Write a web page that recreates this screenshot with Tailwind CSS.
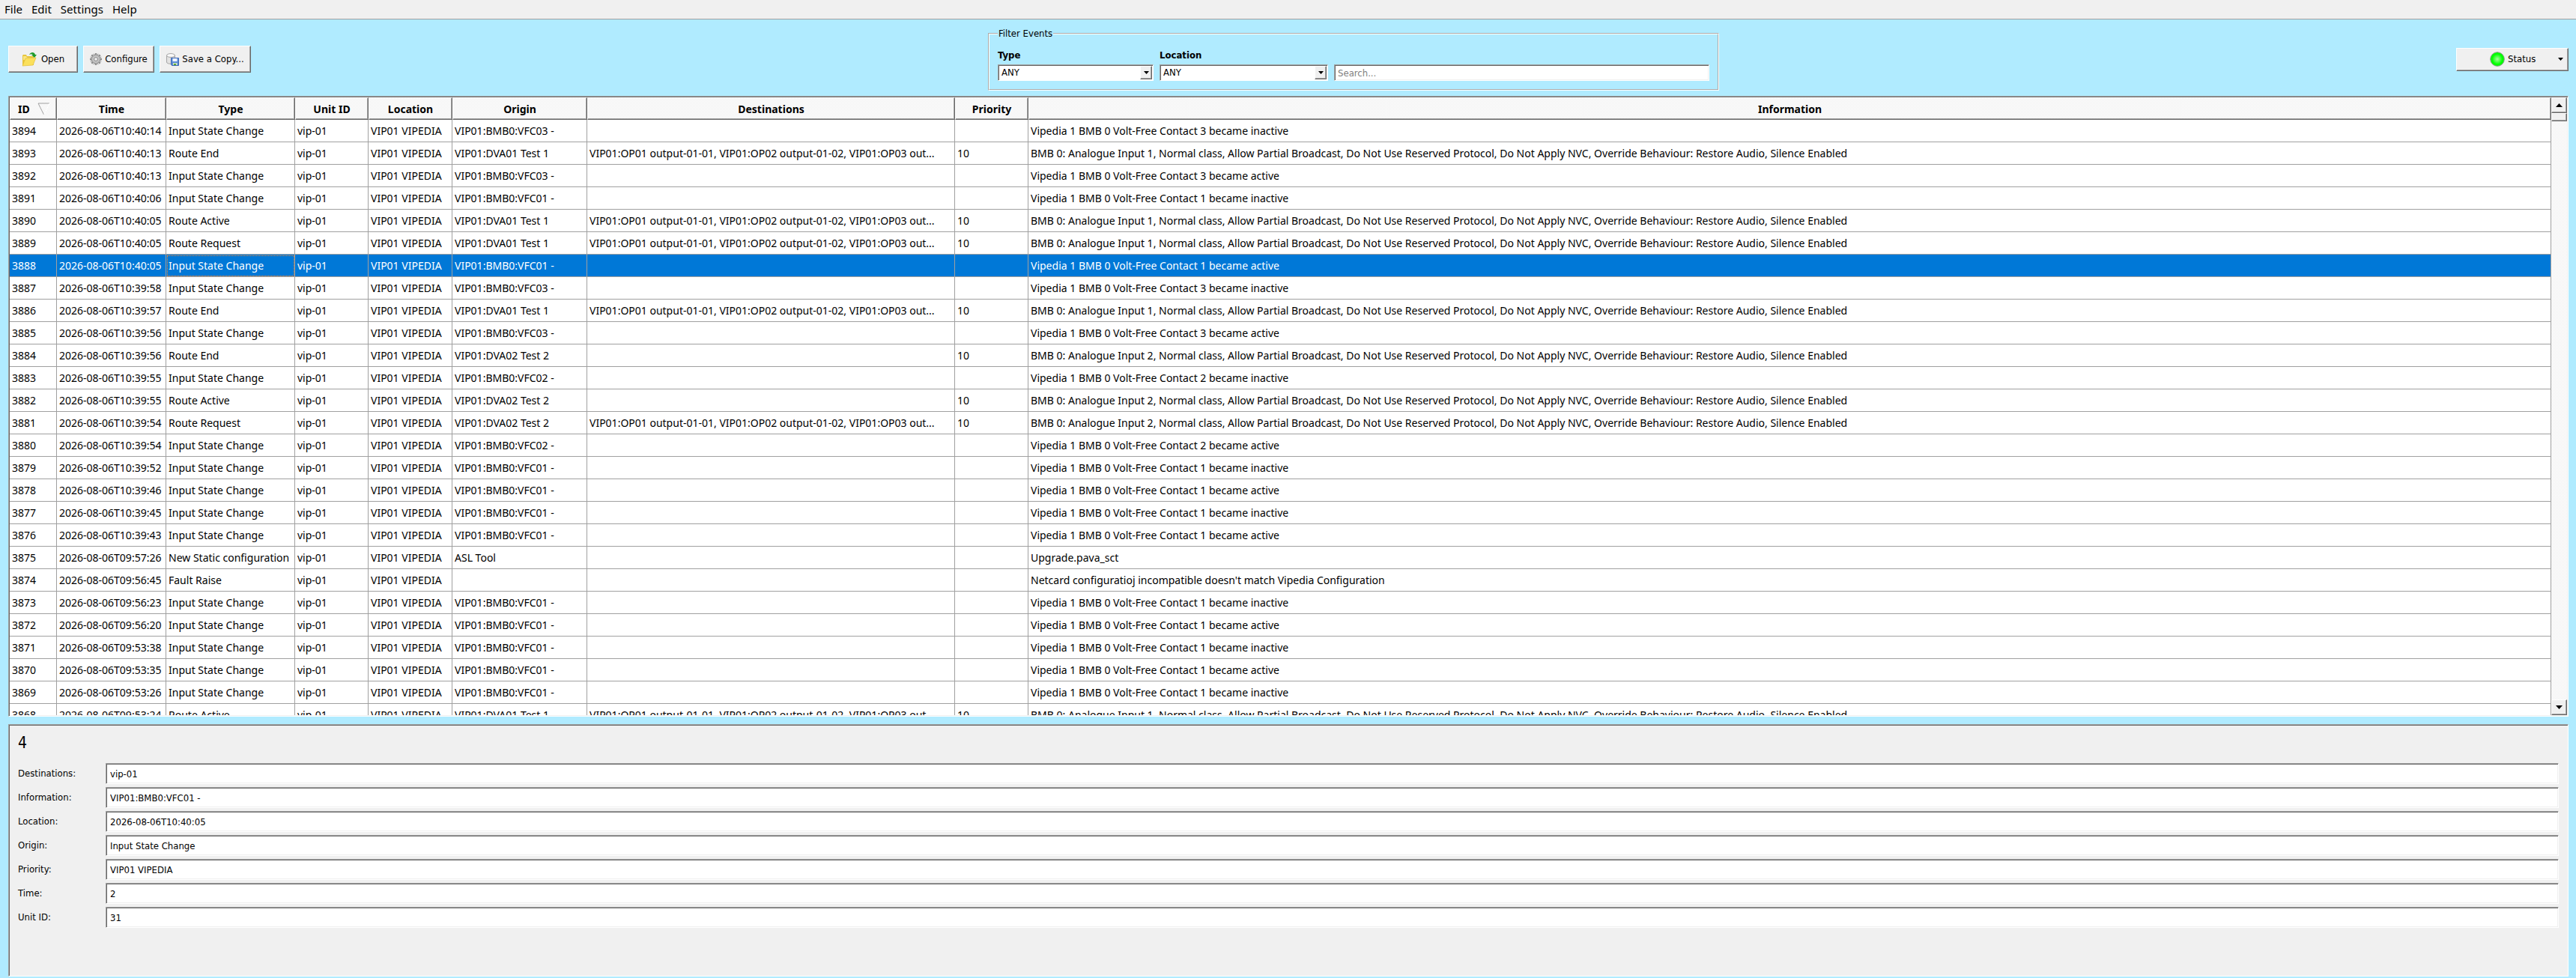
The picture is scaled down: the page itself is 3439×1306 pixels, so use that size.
<!DOCTYPE html>
<html lang="en">

<head>
    <meta charset="UTF-8">
    <meta name="viewport" content="width=device-width, initial-scale=1.0">
    <script src="https://cdn.jsdelivr.net/npm/@tailwindcss/browser@4"></script>
    <title>Event Viewer</title>
</head>

<body class="flex flex-col h-screen overflow-hidden bg-[#b0ebff] text-black text-[13px] font-['DejaVu_Sans_Condensed','DejaVu_Sans',sans-serif]">
    <nav class="flex items-center gap-3 h-[26px] px-1.5 bg-[#f0f0f0] border-b border-[#a0a0a0] text-[15px] font-['Noto_Sans',sans-serif]">
        <button>File</button>
        <button>Edit</button>
        <button>Settings</button>
        <button>Help</button>
    </nav>

    <header class="flex items-center justify-between h-[102px] pt-1 pl-[11px] pr-2.5">
        <div class="flex gap-[7px]">
            <button class="flex items-center justify-center gap-1.5 w-[93px] h-9 bg-[#f0f0f0] border border-t-white border-l-white border-b-[#696969] border-r-[#696969] shadow-[inset_-1px_-1px_0_#a0a0a0]">
                <svg width="20" height="20" viewBox="0 0 20 20">
                    <path d="M1 5l1-1h4l1 2h9v12H1z" fill="#e8c53c" />
                    <path d="M2 6h4l1 2h8v3H2z" fill="#f9e584" />
                    <path d="M5 9l14-1-4 10-14 1z" fill="#fbe05c" stroke="#e3bd3a" stroke-width=".7" />
                    <path d="M10 4c2-4 7-4 8 0h2l-3 4-4-4h2c-1-1-3-1-5 0z" fill="#1d9a2c" />
                </svg>
                Open
            </button>
            <button class="flex items-center justify-center gap-1 w-[95px] h-9 bg-[#f0f0f0] border border-t-white border-l-white border-b-[#696969] border-r-[#696969] shadow-[inset_-1px_-1px_0_#a0a0a0]">
                <svg width="16" height="16" viewBox="0 0 16 16">
                    <g stroke="#8c8c8c" stroke-width="2.4">
                        <path d="M8 0v16M0 8h16M2.3 2.3l11.4 11.4M13.7 2.3L2.3 13.7" />
                        <path d="M5 .8l6 14.4M11 .8L5 15.2M.8 5l14.4 6M15.2 5L.8 11" stroke-width="1" />
                    </g>
                    <circle cx="8" cy="8" r="5.6" fill="#c4c4c4" stroke="#999" />
                    <circle cx="8" cy="8" r="2.4" fill="#f0f0f0" stroke="#888" />
                </svg>
                Configure
            </button>
            <button class="flex items-center justify-center gap-1 w-[122px] h-9 bg-[#f0f0f0] border border-t-white border-l-white border-b-[#696969] border-r-[#696969] shadow-[inset_-1px_-1px_0_#a0a0a0]">
                <svg width="17" height="17" viewBox="0 0 17 17">
                    <path d="M.5 3v9c0 3 11 3 11 0V3z" fill="#e2e2e2" stroke="#a5a5a5" />
                    <ellipse cx="6" cy="3" rx="5.5" ry="2.4" fill="#fafafa" stroke="#a5a5a5" />
                    <path d="M6.5 6.5h10v10h-9l-1-1z" fill="#5b8bd6" stroke="#3d68b5" />
                    <path d="M8.500 7h6v4h-6z" fill="#eef4ff" />
                    <path d="M9 13h5.500v3H9z" fill="#d6ecc8" />
                    <path d="M10 14h3v2h-3z" fill="#5aa53c" />
                </svg>
                Save a Copy...
            </button>
        </div>

        <fieldset class="w-[976px] h-[84px] px-[11px] border-2 [border-style:groove] border-white">
            <legend class="px-px leading-4">Filter Events</legend>
            <div class="flex items-end gap-2 mt-[11px]">
                <div class="flex flex-col w-[208px]">
                    <label for="type" class="font-bold leading-5 mb-0.5">Type</label>
                    <div class="relative h-[22px] bg-white border border-t-[#a0a0a0] border-l-[#a0a0a0] border-b-white border-r-white shadow-[inset_1px_1px_0_#696969]">
                        <select id="type" class="appearance-none w-full h-full pl-1 leading-4 outline-0"><option>ANY</option></select>
                        <span class="absolute right-px top-px bottom-px w-4 flex items-center justify-center pointer-events-none bg-[#f0f0f0] border border-t-white border-l-white border-b-[#696969] border-r-[#696969] shadow-[inset_-1px_-1px_0_#a0a0a0]">
                            <svg width="7" height="4" viewBox="0 0 7 4"><path d="M0 0h7L3.500 4z" /></svg>
                        </span>
                    </div>
                </div>
                <div class="flex flex-col w-[225px]">
                    <label for="location" class="font-bold leading-5 mb-0.5">Location</label>
                    <div class="relative h-[22px] bg-white border border-t-[#a0a0a0] border-l-[#a0a0a0] border-b-white border-r-white shadow-[inset_1px_1px_0_#696969]">
                        <select id="location" class="appearance-none w-full h-full pl-1 leading-4 outline-0"><option>ANY</option></select>
                        <span class="absolute right-px top-px bottom-px w-4 flex items-center justify-center pointer-events-none bg-[#f0f0f0] border border-t-white border-l-white border-b-[#696969] border-r-[#696969] shadow-[inset_-1px_-1px_0_#a0a0a0]">
                            <svg width="7" height="4" viewBox="0 0 7 4"><path d="M0 0h7L3.500 4z" /></svg>
                        </span>
                    </div>
                </div>
                <input type="text" aria-label="Search" placeholder="Search..."
                    class="flex-1 h-[22px] px-1 bg-white placeholder:text-[#808080] outline-0 border border-t-[#a0a0a0] border-l-[#a0a0a0] border-b-white border-r-white shadow-[inset_1px_1px_0_#696969,inset_-1px_-1px_0_#f0f0f0]">
            </div>
        </fieldset>

        <button class="flex items-center w-[150px] h-[31px] pl-11 pr-1.5 bg-[#f0f0f0] border border-t-white border-l-white border-b-[#696969] border-r-[#696969] shadow-[inset_-1px_-1px_0_#a0a0a0]">
            <svg width="20" height="20" viewBox="0 0 20 20">
                <defs>
                    <radialGradient id="led">
                        <stop offset="0" stop-color="#a8ff9c" />
                        <stop offset=".75" stop-color="#0f0" />
                    </radialGradient>
                </defs>
                <circle cx="10" cy="10" r="9.300" fill="url(#led)" stroke="#8a9a8a" />
            </svg>
            <span class="ml-1">Status</span>
            <svg class="ml-auto" width="7" height="4" viewBox="0 0 7 4"><path d="M0 0h7L3.500 4z" /></svg>
        </button>
    </header>

    <main class="flex flex-1 min-h-0 ml-[11px] mr-2.5 p-px bg-white border border-t-[#a0a0a0] border-l-[#a0a0a0] border-b-white border-r-white shadow-[inset_1px_1px_0_#696969,inset_-1px_-1px_0_#f0f0f0]">
        <div class="flex-1 min-w-0 overflow-hidden">
            <table class="w-full table-fixed border-separate border-spacing-0 text-[14px] font-['Noto_Sans',sans-serif]">
                <colgroup>
                    <col class="w-[63px]">
                    <col class="w-[146px]">
                    <col class="w-[172px]">
                    <col class="w-[98px]">
                    <col class="w-[112px]">
                    <col class="w-[180px]">
                    <col class="w-[491px]">
                    <col class="w-[98px]">
                    <col>
                </colgroup>
                <thead>
                    <tr id="head"></tr>
                </thead>
                <tbody id="events"></tbody>
            </table>
        </div>
        <div class="flex flex-col w-[21px] bg-[repeating-conic-gradient(#f0f0f0_0_25%,#fff_0_50%)] bg-[length:2px_2px]">
            <button aria-label="Scroll up" class="flex items-center justify-center h-[21px] bg-[#f0f0f0] border border-t-white border-l-white border-b-[#696969] border-r-[#696969] shadow-[inset_-1px_-1px_0_#a0a0a0]">
                <svg width="9" height="5" viewBox="0 0 9 5"><path d="M0 5h9L4.500 0z" /></svg>
            </button>
            <div class="h-[11px] bg-[#f0f0f0] border border-t-white border-l-white border-b-[#696969] border-r-[#696969] shadow-[inset_-1px_-1px_0_#a0a0a0]"></div>
            <button aria-label="Scroll down" class="flex items-center justify-center h-[21px] mt-auto bg-[#f0f0f0] border border-t-white border-l-white border-b-[#696969] border-r-[#696969] shadow-[inset_-1px_-1px_0_#a0a0a0]">
                <svg width="9" height="5" viewBox="0 0 9 5"><path d="M0 0h9L4.500 5z" /></svg>
            </button>
        </div>
    </main>

    <section class="mt-2.5 mb-0.5 ml-[11px] mr-2.5 pt-3 pb-16 px-3 bg-[#f0f0f0] border border-t-[#a0a0a0] border-l-[#a0a0a0] border-b-white border-r-white shadow-[inset_1px_1px_0_#696969]">
        <h2 class="mb-[15px] text-[21px] leading-6">4</h2>
        <form id="details" class="flex flex-col gap-1"></form>
    </section>
</body>
<script>
    var headers = ["ID", "Time", "Type", "Unit ID", "Location", "Origin", "Destinations", "Priority", "Information"];

    var DEST = "VIP01:OP01 output-01-01, VIP01:OP02 output-01-02, VIP01:OP03 out...";
    var contact = (n, state) => `Vipedia 1 BMB 0 Volt-Free Contact ${n} became ${state}`;
    var route = (n) => `BMB 0: Analogue Input ${n}, Normal class, Allow Partial Broadcast, Do Not Use Reserved Protocol, Do Not Apply NVC, Override Behaviour: Restore Audio, Silence Enabled`;

    // id, time, type, origin, destinations, priority, information
    var events = [
        [3894, "2026-08-06T10:40:14", "Input State Change", "VIP01:BMB0:VFC03 -", "", "", contact(3, "inactive")],
        [3893, "2026-08-06T10:40:13", "Route End", "VIP01:DVA01 Test 1", DEST, "10", route(1)],
        [3892, "2026-08-06T10:40:13", "Input State Change", "VIP01:BMB0:VFC03 -", "", "", contact(3, "active")],
        [3891, "2026-08-06T10:40:06", "Input State Change", "VIP01:BMB0:VFC01 -", "", "", contact(1, "inactive")],
        [3890, "2026-08-06T10:40:05", "Route Active", "VIP01:DVA01 Test 1", DEST, "10", route(1)],
        [3889, "2026-08-06T10:40:05", "Route Request", "VIP01:DVA01 Test 1", DEST, "10", route(1)],
        [3888, "2026-08-06T10:40:05", "Input State Change", "VIP01:BMB0:VFC01 -", "", "", contact(1, "active")],
        [3887, "2026-08-06T10:39:58", "Input State Change", "VIP01:BMB0:VFC03 -", "", "", contact(3, "inactive")],
        [3886, "2026-08-06T10:39:57", "Route End", "VIP01:DVA01 Test 1", DEST, "10", route(1)],
        [3885, "2026-08-06T10:39:56", "Input State Change", "VIP01:BMB0:VFC03 -", "", "", contact(3, "active")],
        [3884, "2026-08-06T10:39:56", "Route End", "VIP01:DVA02 Test 2", "", "10", route(2)],
        [3883, "2026-08-06T10:39:55", "Input State Change", "VIP01:BMB0:VFC02 -", "", "", contact(2, "inactive")],
        [3882, "2026-08-06T10:39:55", "Route Active", "VIP01:DVA02 Test 2", "", "10", route(2)],
        [3881, "2026-08-06T10:39:54", "Route Request", "VIP01:DVA02 Test 2", DEST, "10", route(2)],
        [3880, "2026-08-06T10:39:54", "Input State Change", "VIP01:BMB0:VFC02 -", "", "", contact(2, "active")],
        [3879, "2026-08-06T10:39:52", "Input State Change", "VIP01:BMB0:VFC01 -", "", "", contact(1, "inactive")],
        [3878, "2026-08-06T10:39:46", "Input State Change", "VIP01:BMB0:VFC01 -", "", "", contact(1, "active")],
        [3877, "2026-08-06T10:39:45", "Input State Change", "VIP01:BMB0:VFC01 -", "", "", contact(1, "inactive")],
        [3876, "2026-08-06T10:39:43", "Input State Change", "VIP01:BMB0:VFC01 -", "", "", contact(1, "active")],
        [3875, "2026-08-06T09:57:26", "New Static configuration", "ASL Tool", "", "", "Upgrade.pava_sct"],
        [3874, "2026-08-06T09:56:45", "Fault Raise", "", "", "", "Netcard configuratioj incompatible doesn't match Vipedia Configuration"],
        [3873, "2026-08-06T09:56:23", "Input State Change", "VIP01:BMB0:VFC01 -", "", "", contact(1, "inactive")],
        [3872, "2026-08-06T09:56:20", "Input State Change", "VIP01:BMB0:VFC01 -", "", "", contact(1, "active")],
        [3871, "2026-08-06T09:53:38", "Input State Change", "VIP01:BMB0:VFC01 -", "", "", contact(1, "inactive")],
        [3870, "2026-08-06T09:53:35", "Input State Change", "VIP01:BMB0:VFC01 -", "", "", contact(1, "active")],
        [3869, "2026-08-06T09:53:26", "Input State Change", "VIP01:BMB0:VFC01 -", "", "", contact(1, "inactive")],
        [3868, "2026-08-06T09:53:24", "Route Active", "VIP01:DVA01 Test 1", DEST, "10", route(1)],
    ];
    var selected = 3888;

    var details = [
        ["Destinations", "vip-01"],
        ["Information", "VIP01:BMB0:VFC01 -"],
        ["Location", "2026-08-06T10:40:05"],
        ["Origin", "Input State Change"],
        ["Priority", "VIP01 VIPEDIA"],
        ["Time", "2"],
        ["Unit ID", "31"],
    ];

    var sort_icon = `<svg width="17" height="17" viewBox="0 0 17 17" fill="none"><path d="M16 1H1l7.500 15" stroke="#a0a0a0" /><path d="M9 16l7-15" stroke="#fff" /></svg>`;

    document.getElementById("head").innerHTML = headers.map((name, i) => `
        <th class="h-[30px] p-0 font-bold bg-[repeating-conic-gradient(#f0f0f0_0_25%,#fff_0_50%)] bg-[length:2px_2px] border border-t-white border-l-white border-b-[#696969] border-r-[#696969] shadow-[inset_-1px_-1px_0_#a0a0a0]">
            ${i === 0 ? `<div class="flex items-center justify-between pl-2.5 pr-2">${name}${sort_icon}</div>` : name}
        </th>`).join("");

    document.getElementById("events").innerHTML = events.map(([id, time, type, origin, dest, priority, info]) => {
        var cells = [id, time, type, "vip-01", "VIP01 VIPEDIA", origin, dest, priority, info];
        var row = id === selected ? "bg-[#0078d7] text-white" : "bg-white";
        return `<tr class="${row}">` + cells.map((text, i) => {
            var focus = id === selected && i === 2 ? "outline-1 outline-dotted -outline-offset-2 outline-[#ff8728]" : "";
            return `<td class="h-[30px] p-0 pl-[3px] whitespace-nowrap border-b border-r border-[#a0a0a0] ${focus}">${text}</td>`;
        }).join("") + "</tr>";
    }).join("");

    document.getElementById("details").innerHTML = details.map(([name, value], i) => `
        <div class="flex items-center h-7">
            <label for="detail-${i}" class="w-[117px]">${name}:</label>
            <input id="detail-${i}" type="text" readonly value="${value}"
                class="flex-1 h-7 px-[5px] bg-white outline-0 border border-t-[#a0a0a0] border-l-[#a0a0a0] border-b-white border-r-white shadow-[inset_1px_1px_0_#696969,inset_-1px_-1px_0_#f0f0f0]">
        </div>`).join("");
</script>

</html>
